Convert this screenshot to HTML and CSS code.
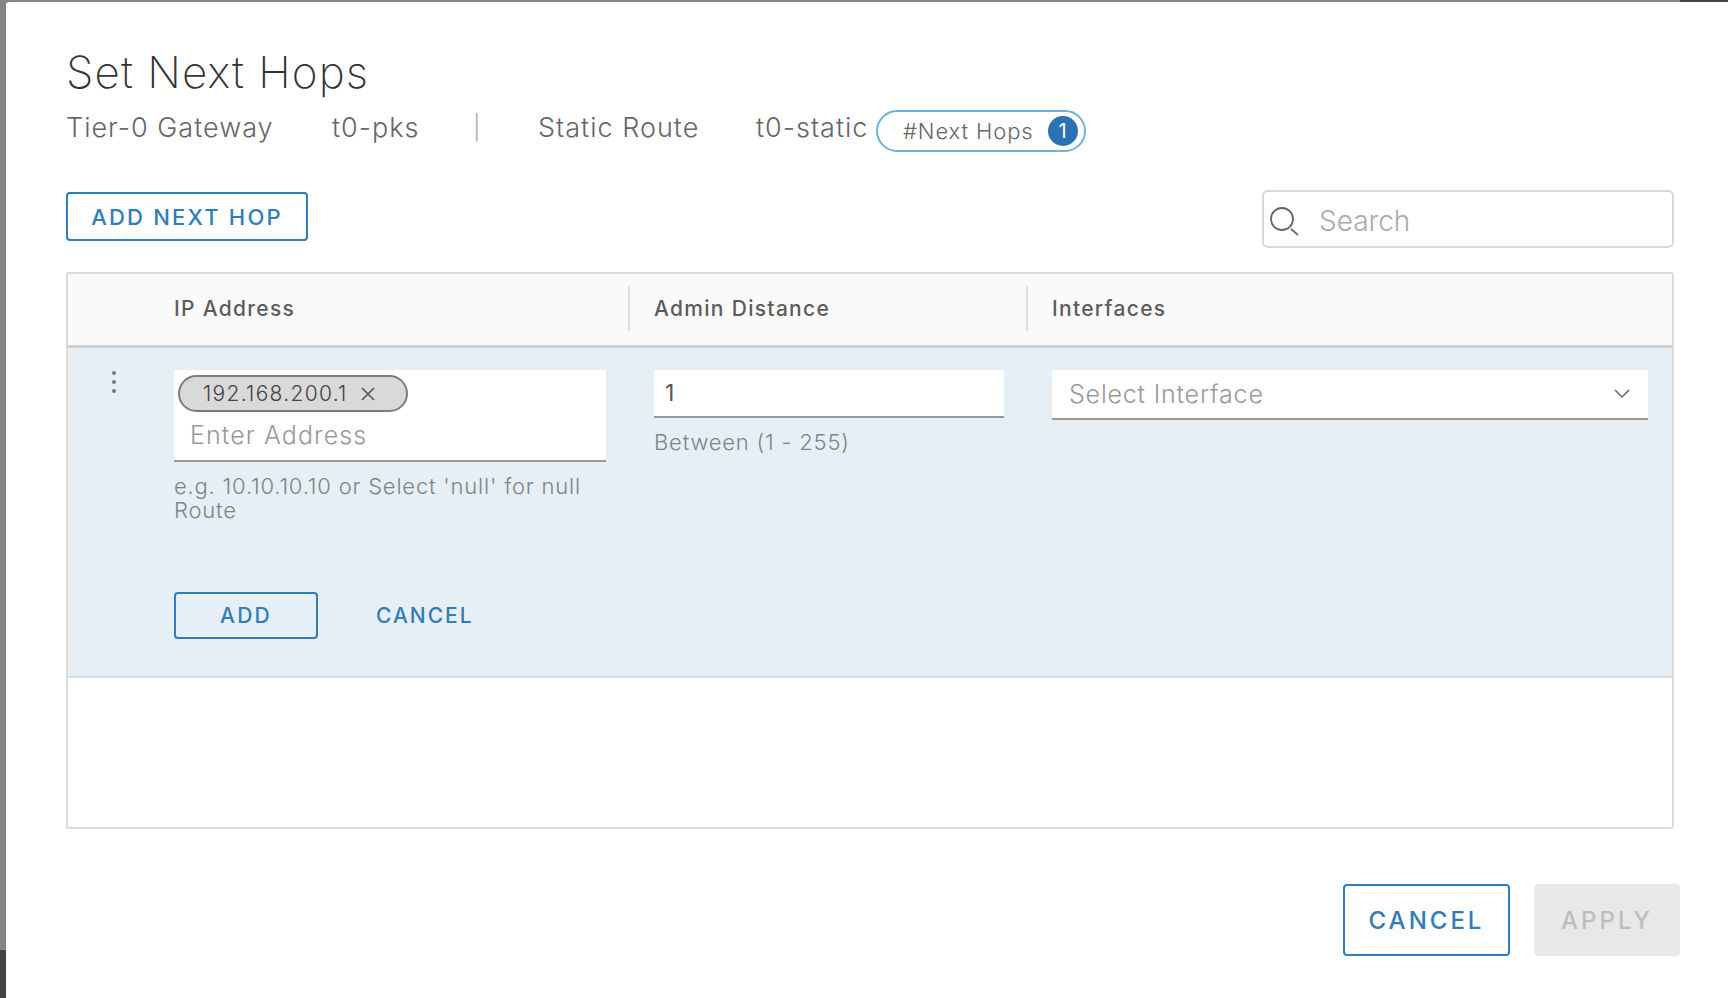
FILE: index.html
```html
<!DOCTYPE html>
<html lang="en">
<head>
  <meta charset="UTF-8" />
  <title>Set Next Hops</title>
  <link rel="stylesheet" href="styles.css">
</head>
<body>

<section class="modal">
  <h1>Set Next Hops</h1>
  <div class="subtitle">
    <span class="sub-gateway">Tier-0 Gateway</span>
    <span class="sub-name">t0-pks</span>
    <span class="sub-sep">|</span>
    <span class="sub-route">Static Route</span>
    <span class="sub-static">t0-static</span>
    <span class="pill">#Next Hops <b class="badge">1</b></span>
  </div>

  <div class="toolbar">
    <button class="btn btn-add-hop">ADD NEXT HOP</button>
    <div class="search">
      <svg width="30" height="30" viewBox="0 0 30 30" fill="none" stroke="#666" stroke-width="1.8">
        <circle cx="12" cy="13" r="11"/>
        <path d="M21 23l7 6"/>
      </svg>
      <span>Search</span>
    </div>
  </div>

  <div class="table">
    <div class="thead">
      <div></div>
      <div class="th th-first">IP Address</div>
      <div class="th">Admin Distance</div>
      <div class="th">Interfaces</div>
    </div>

    <div class="row">
      <div class="dots"><i></i><i></i><i></i></div>

      <div class="cell-ip">
        <div class="field field-ip">
          <span class="chip">192.168.200.1
            <svg width="16" height="16" viewBox="0 0 16 16" stroke="#555" stroke-width="1.6"><path d="M2 2l12 12M14 2L2 14"/></svg>
          </span>
          <span class="placeholder">Enter Address</span>
        </div>
        <p class="hint">e.g. 10.10.10.10 or Select 'null' for null Route</p>
        <div class="row-actions">
          <button class="btn btn-add">ADD</button>
          <button class="btn-link">CANCEL</button>
        </div>
      </div>

      <div class="cell-admin">
        <div class="field field-num">1</div>
        <p class="hint">Between (1 - 255)</p>
      </div>

      <div class="field field-select">
        <span class="placeholder">Select Interface</span>
        <svg width="18" height="12" viewBox="0 0 18 12" fill="none" stroke="#666" stroke-width="1.5"><path d="M2 2l7 7 7-7"/></svg>
      </div>
    </div>
  </div>

  <footer class="footer">
    <button class="btn btn-cancel">CANCEL</button>
    <button class="btn btn-apply">APPLY</button>
  </footer>
</section>

</body>
</html>
```

FILE: styles.css
```css
* {
  box-sizing: border-box;
}
body {
  margin: 0;
  height: 998px;
  overflow: hidden;
  padding: 2px 0 0 6px;
  font-family: Inter, "Open Sans", sans-serif;
  color: #565656;
  background:
    linear-gradient(#444, #444) left bottom / 6px 48px no-repeat,
    linear-gradient(#444, #444) right top / 48px 2px no-repeat,
    #858585;
}
button {
  font-family: inherit;
  background: none;
  cursor: pointer;
}

.modal {
  height: 996px;
  padding: 0 48px 0 60px;
  background: #fff;
  border-radius: 3px 0 0 0;
}
h1 {
  margin: 0;
  padding-top: 42px;
  height: 103px;
  font-size: 44px;
  line-height: 56px;
  font-weight: 200;
  letter-spacing: 1.1px;
  color: #333;
}

/* subtitle line */
.subtitle {
  display: flex;
  align-items: center;
  height: 45px;
  font-size: 27px;
  font-weight: 300;
  letter-spacing: 1px;
  color: #666;
}
.sub-gateway { width: 266px; }
.sub-name { width: 141px; }
.sub-sep { width: 65px; color: #aaa; font-size: 24px; }
.sub-route { width: 218px; }
.sub-static { width: 120px; }
.pill {
  display: flex;
  align-items: center;
  justify-content: space-between;
  width: 210px;
  height: 42px;
  margin-top: 6px;
  padding: 0 6px 0 25px;
  border: 2px solid #6fb0dc;
  border-radius: 21px;
  font-size: 22px;
  font-weight: 300;
  letter-spacing: 0.9px;
  color: #666;
}
.badge {
  width: 30px;
  height: 30px;
  border-radius: 50%;
  background: #2b72b5;
  color: #fff;
  font-size: 20px;
  font-weight: 400;
  line-height: 30px;
  text-align: center;
}

.toolbar {
  display: flex;
  justify-content: space-between;
  align-items: flex-start;
  margin: 40px 6px 0 0;
  height: 82px;
}
.btn {
  border: 2px solid #2f7dba;
  border-radius: 4px;
  color: #2f7dba;
  letter-spacing: 2.2px;
  font-weight: 500;
}
.btn-add-hop {
  width: 242px;
  height: 49px;
  margin-top: 2px;
  font-size: 22px;
}
.search {
  display: flex;
  align-items: center;
  gap: 19px;
  width: 412px;
  height: 58px;
  padding: 3px 0 0 6px;
  border: 2px solid #d8d8d8;
  border-radius: 6px;
  font-size: 28px;
  font-weight: 300;
  color: #aaa;
}

/* table */
.table {
  height: 557px;
  margin-right: 6px;
  border: 2px solid #dadada;
  border-radius: 3px;
}
.thead, .row {
  display: grid;
  grid-template-columns: 59px 433px 351px 1fr;
  column-gap: 47px;
}
.thead {
  height: 74px;
  padding: 12px 0 14px;
  background: #fafafa;
  border-bottom: 3px solid #d0d0d0;
  grid-template-columns: 106px 454px 398px 1fr;
  column-gap: 0;
}
.th {
  display: flex;
  align-items: center;
  padding-left: 24px;
  border-left: 2px solid #ddd;
  font-size: 21px;
  font-weight: 500;
  letter-spacing: 1.3px;
  color: #5c5c5c;
}
.th-first {
  padding-left: 0;
  border-left: 0;
}
.row {
  height: 330px;
  padding-top: 22px;
  background: #e7eff6;
  border-bottom: 2px solid #d6dde3;
}
.dots {
  display: flex;
  flex-direction: column;
  align-items: flex-end;
  gap: 5px;
  padding: 1px 11px 0 0;
}
.dots i {
  width: 4px;
  height: 4px;
  border-radius: 50%;
  background: #777;
}
.field {
  background: #fff;
  border-bottom: 2px solid #999;
}
.field-ip {
  width: 432px;
  height: 92px;
  padding: 5px 0 0 4px;
}
.chip {
  display: flex;
  align-items: center;
  gap: 12px;
  width: 230px;
  height: 37px;
  padding-left: 23px;
  background: #d9d9d9;
  border: 2px solid #7c7c7c;
  border-radius: 19px;
  font-size: 21px;
  font-weight: 300;
  letter-spacing: 1.3px;
  color: #444;
}
.placeholder {
  font-size: 25px;
  font-weight: 300;
  letter-spacing: 0.8px;
  color: #999;
}
.field-ip .placeholder {
  display: block;
  margin: 4px 0 0 12px;
  line-height: 38px;
  letter-spacing: 1.1px;
}
.hint {
  margin: 12px 0 0;
  max-width: 432px;
  font-size: 22px;
  font-weight: 300;
  letter-spacing: 0.8px;
  line-height: 24px;
  color: #7c848b;
}
.row-actions {
  display: flex;
  align-items: center;
  gap: 58px;
  margin-top: 70px;
}
.btn-add {
  width: 144px;
  height: 47px;
  font-size: 21px;
}
.btn-link {
  border: 0;
  padding: 0;
  font-size: 21px;
  font-weight: 500;
  letter-spacing: 2px;
  color: #2f7dba;
}
.field-num {
  width: 350px;
  height: 48px;
  padding-left: 11px;
  font-size: 23px;
  line-height: 46px;
  color: #555;
}
.field-select {
  display: flex;
  justify-content: space-between;
  align-items: center;
  width: 596px;
  height: 50px;
  padding: 0 17px 0 17px;
}

.footer {
  display: flex;
  justify-content: flex-end;
  gap: 24px;
  margin-top: 55px;
}
.btn-cancel, .btn-apply {
  height: 72px;
  font-size: 24px;
  letter-spacing: 3px;
}
.btn-cancel {
  width: 167px;
}
.btn-apply {
  width: 146px;
  border: 0;
  background: #e8e8e8;
  color: #bdbdbd;
}
```
